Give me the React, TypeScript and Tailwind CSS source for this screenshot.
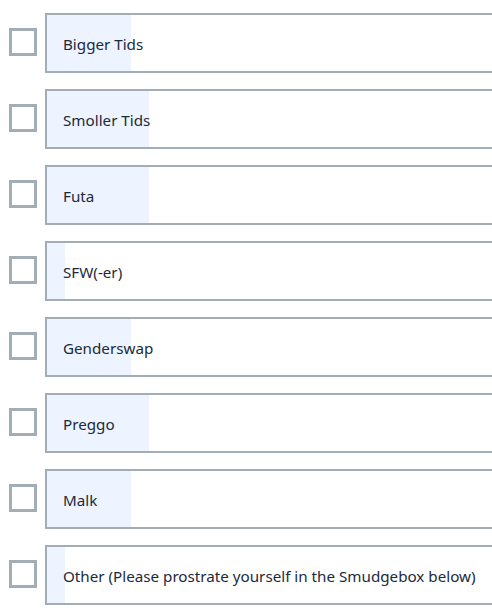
import React from "react";

const items: { label: string; fill: number }[] = [
  { label: "Bigger Tids", fill: 84 },
  { label: "Smoller Tids", fill: 102 },
  { label: "Futa", fill: 102 },
  { label: "SFW(-er)", fill: 18 },
  { label: "Genderswap", fill: 84 },
  { label: "Preggo", fill: 102 },
  { label: "Malk", fill: 84 },
  { label: "Other (Please prostrate yourself in the Smudgebox below)", fill: 18 },
];

export default function App() {
  return (
    <div
      className="w-[492px] h-[615px] overflow-hidden bg-white pt-[13px] flex flex-col gap-[16px]"
      style={{ fontFamily: "'Noto Sans', 'Liberation Sans', sans-serif" }}
    >
      {items.map((it) => (
        <div key={it.label} className="flex items-center">
          <div className="ml-[9px] w-[28px] h-[28px] border-[3px] border-[#a3adb5] shrink-0 -mt-[3px]" />
          <div className="ml-[8px] w-[470px] shrink-0 h-[60px] border-2 border-[#a3adb5] relative flex items-center">
            <div
              className="absolute left-0 top-0 bottom-0 bg-[#edf4ff]"
              style={{ width: it.fill }}
            />
            <span className="relative pl-[16px] pt-[3px] text-[15.2px] text-[#1b2a3b] whitespace-nowrap">
              {it.label}
            </span>
          </div>
        </div>
      ))}
    </div>
  );
}
